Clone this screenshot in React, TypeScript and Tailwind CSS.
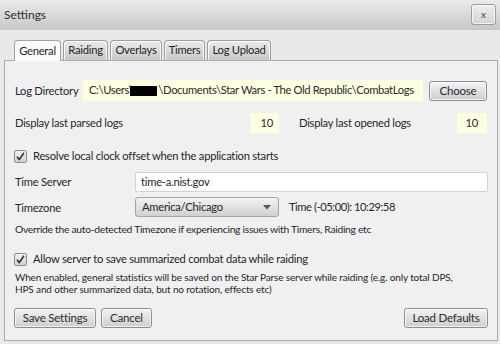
import React from "react";

const FONT = { fontFamily: "Lato, 'Open Sans', sans-serif" };

function Btn({ children, className = "" }: { children: React.ReactNode; className?: string }) {
  return (
    <div
      className={`h-[20px] flex items-center justify-center rounded-[3px] border border-[#8d8d8d] bg-gradient-to-b from-[#f4f4f4] to-[#cdcdcd] shadow-[inset_0_0_0_1px_rgba(255,255,255,0.7)] text-[11.5px] tracking-[-0.2px] text-[#2a2a30] ${className}`}
    >
      {children}
    </div>
  );
}

function Check() {
  return (
    <div className="w-[13px] h-[13px] rounded-[2px] border border-[#8e8e8e] bg-gradient-to-b from-[#f2f2f2] to-[#d2d2d2] flex items-center justify-center">
      <svg width="11" height="11" viewBox="0 0 11 11">
        <path d="M2 5.8 L4.3 8.6 L9 1.8" fill="none" stroke="#3a3a3a" strokeWidth="1.7" strokeLinejoin="round" />
      </svg>
    </div>
  );
}

function Tab({ label, active = false, w }: { label: string; active?: boolean; w: string }) {
  if (active) {
    return (
      <div
        className={`${w} h-[21px] -mb-px relative z-10 flex items-center justify-center rounded-t-[4px] border border-b-0 border-[#a3a3a3] bg-[#fafafa] text-[11.2px] tracking-[-0.25px] text-[#1f1f2a]`}
      >
        {label}
      </div>
    );
  }
  return (
    <div
      className={`${w} h-[20px] flex items-center justify-center rounded-t-[4px] border border-b-0 border-[#9e9e9e] bg-gradient-to-b from-[#ebebeb] to-[#c8c8c8] shadow-[inset_1px_1px_0_rgba(255,255,255,0.8),inset_-1px_0_0_rgba(255,255,255,0.8)] text-[11.2px] tracking-[-0.25px] text-[#1f1f2a]`}
    >
      {label}
    </div>
  );
}

export default function App() {
  return (
    <div className="w-[500px] h-[344px] bg-[#e9e9e9] flex flex-col overflow-hidden text-[#26262e]" style={FONT}>
      {/* Title bar */}
      <div className="h-[30px] flex items-center justify-between pl-[4px] pr-[4px] bg-gradient-to-b from-[#ebebeb] to-[#c7c7c7]">
        <span className="text-[12px] text-[#2e2e33] -mt-[1px]">Settings</span>
        <div className="w-[25px] h-[21px] -mt-[2px] rounded-[3px] border border-[#9d9d9d] bg-gradient-to-b from-[#efefef] to-[#d3d3d3] shadow-[inset_0_0_0_1px_rgba(255,255,255,0.7)] flex items-center justify-center text-[10px] text-[#444]">
          x
        </div>
      </div>

      {/* Tabs */}
      <div className="pt-[10px] flex flex-col">
        <div className="flex items-end pl-[14px] gap-[2px] h-[20px]">
          <Tab label="General" active w="w-[47px]" />
          <Tab label="Raiding" w="w-[45px]" />
          <Tab label="Overlays" w="w-[52px]" />
          <Tab label="Timers" w="w-[41px]" />
          <Tab label="Log Upload" w="w-[64px]" />
        </div>

        {/* Panel */}
        <div className="ml-[4px] w-[494px] h-[281px] border border-[#acacac] bg-[#f0f0f0] px-[9px] flex flex-col text-[11.2px] tracking-[-0.25px]">
          {/* Row 1 */}
          <div className="mt-[19px] h-[21px] flex items-center">
            <span className="w-[69px] pl-[1px] pt-[2px]">Log Directory</span>
            <div className="w-[340px] h-[21px] rounded-[2px] bg-[#fefee0] flex items-center pl-[6px] text-[#2a2a30] whitespace-nowrap tracking-[-0.35px]">
              <span>C:\Users\</span>
              <span className="inline-block w-[27px] h-[10px] bg-black -ml-[3px] mr-[1px]" />
              <span>\Documents\Star Wars - The Old Republic\CombatLogs</span>
            </div>
            <Btn className="w-[58px] h-[19px] ml-[6px]">Choose</Btn>
          </div>

          {/* Row 2 */}
          <div className="mt-[12px] h-[20px] flex items-center">
            <span className="w-[236px] pl-[1px]">Display last parsed logs</span>
            <div className="w-[29px] h-[20px] rounded-[2px] bg-[#fefee0] flex items-center justify-end pr-[6px]">10</div>
            <span className="w-[158px] ml-[20px]">Display last opened logs</span>
            <div className="w-[30px] h-[20px] rounded-[2px] bg-[#fefee0] flex items-center justify-end pr-[9px]">10</div>
          </div>

          {/* Row 3 */}
          <div className="mt-[15px] h-[16px] flex items-center gap-[6px]">
            <Check />
            <span>Resolve local clock offset when the application starts</span>
          </div>

          {/* Row 4 */}
          <div className="mt-[8px] h-[20px] flex items-center">
            <span className="w-[121px] pl-[1px]">Time Server</span>
            <div className="flex-1 h-[20px] rounded-[2px] border border-[#d2d2d2] bg-white flex items-center pl-[5px]">time-a.nist.gov</div>
          </div>

          {/* Row 5 */}
          <div className="mt-[5px] h-[20px] flex items-center">
            <span className="w-[121px] pl-[1px] pt-[2px]">Timezone</span>
            <div className="w-[144px] h-[20px] rounded-[3px] border border-[#a6a6a6] bg-gradient-to-b from-[#f3f3f3] to-[#d0d0d0] flex items-center justify-between pl-[6px] pr-[7px]">
              <span>America/Chicago</span>
              <svg width="8" height="5" viewBox="0 0 8 5">
                <path d="M0 0 H8 L4 4.5 Z" fill="#555" />
              </svg>
            </div>
            <span className="ml-[10px] tracking-[-0.45px]">Time (-05:00): 10:29:58</span>
          </div>

          {/* Row 6 */}
          <div className="mt-[6px] h-[14px] flex items-center pl-[1px] text-[10.3px] tracking-[-0.28px]">
            Override the auto-detected Timezone if experiencing issues with Timers, Raiding etc
          </div>

          {/* Row 7 */}
          <div className="mt-[14px] h-[16px] flex items-center gap-[6px]">
            <Check />
            <span>Allow server to save summarized combat data while raiding</span>
          </div>

          {/* Row 8 */}
          <div className="mt-[4px] pl-[1px] text-[10px] tracking-[-0.14px] leading-[12px]">
            <div>When enabled, general statistics will be saved on the Star Parse server while raiding (e.g. only total DPS,</div>
            <div>HPS and other summarized data, but no rotation, effects etc)</div>
          </div>

          {/* Row 9 */}
          <div className="mt-[13px] h-[20px] flex items-center">
            <Btn className="w-[82px]">Save Settings</Btn>
            <Btn className="w-[51px] ml-[5px]">Cancel</Btn>
            <div className="flex-1" />
            <Btn className="w-[84px]">Load Defaults</Btn>
          </div>
        </div>
      </div>
    </div>
  );
}
